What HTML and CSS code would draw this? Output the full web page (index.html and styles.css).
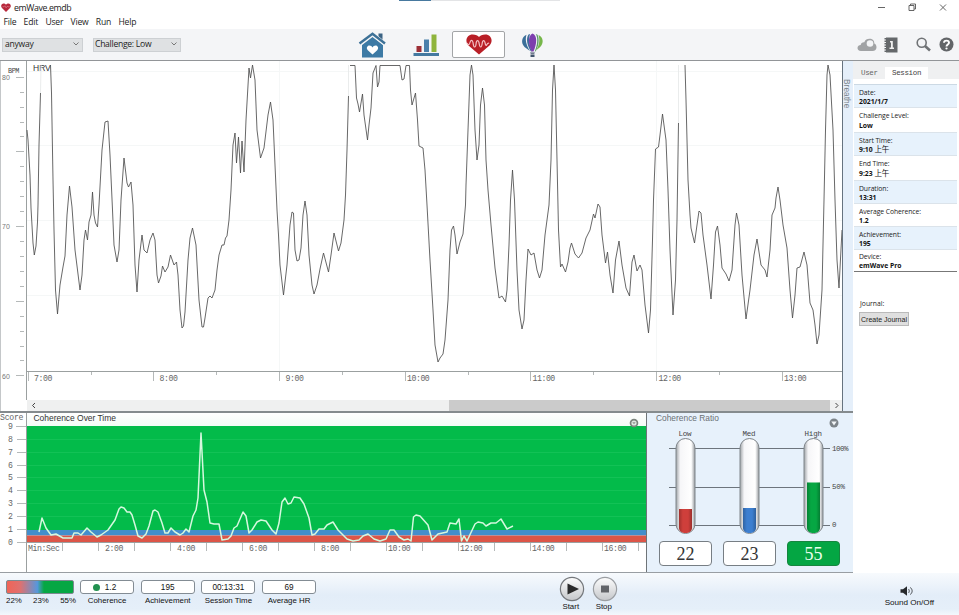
FILE: index.html
```html
<!DOCTYPE html>
<html lang="en">
<head>
    <meta charset="UTF-8">
    <meta name="viewport" content="width=device-width, initial-scale=1.0">
    <title>emWave.emdb</title>
    <link rel="stylesheet" href="styles.css">
</head>
<body>
    <header class="titlebar">
        <svg class="app-icon" width="10" height="9" viewBox="0 0 10 9"><path d="M5 9L1 5C-.8 2.7.7.4 2.6.4 3.8.4 4.6 1 5 1.8 5.4 1 6.2.4 7.4.4 9.3.4 10.8 2.7 9 5z" fill="#b8283c"/><path d="M1.500 3.800h1.300l1-1 1.300 2 1.200-1.500.8.5h1.500" fill="none" stroke="#dc8794" stroke-width=".7"/></svg>
        <span class="app-name">emWave.emdb</span>
        <div class="window-buttons">
            <svg width="70" height="11" viewBox="0 0 70 11" fill="none" stroke="#555" stroke-width=".9">
                <path d="M1 5.500h7M32 3.500h5v5h-5zM33.500 3.300v-1.300h5v5h-1.300M63 2.500l6 6M69 2.500l-6 6"/>
            </svg>
        </div>
        <div class="loading-line"></div>
    </header>
    <nav class="menubar">
        <a>File</a>
        <a>Edit</a>
        <a>User</a>
        <a>View</a>
        <a>Run</a>
        <a>Help</a>
    </nav>

    <div class="toolbar">
        <div class="select select-user">anyway<svg width="6" height="4" viewBox="0 0 6 4"><path d="M.5.5L3 3 5.500.5"/></svg></div>
        <div class="select select-level">Challenge: Low<svg width="6" height="4" viewBox="0 0 6 4"><path d="M.5.5L3 3 5.500.5"/></svg></div>
        <div class="views">
            <div class="view view-home">
                <svg width="28" height="26" viewBox="0 0 28 26">
                    <path d="M20.500 1.500h4v7l-4-3.500z" fill="#3b6384"/>
                    <path d="M4 13L14.500 5 25 13v12.500H4z" fill="#3d7aa5"/>
                    <path d="M1.500 12L14.500 2l12.500 10" fill="none" stroke="#f4f5f7" stroke-width="4"/>
                    <path d="M1.500 11.500L14.500 1.800l12.500 9.700" fill="none" stroke="#3d7197" stroke-width="2.400"/>
                    <path d="M14.500 22.500l-4.700-4.300c-2-2.200-.4-4.700 1.500-4.700 1.500 0 2.700.9 3.200 1.900.5-1 1.700-1.900 3.200-1.900 1.900 0 3.500 2.500 1.500 4.700z" fill="#fff"/>
                </svg>
            </div>
            <div class="view">
                <svg width="28" height="26" viewBox="0 0 28 26">
                    <path d="M4.500 14h5v6h-5z" fill="#9c2f36"/>
                    <path d="M12 7.500h5V20h-5z" fill="#4a80ab"/>
                    <path d="M19.500 2.500h5V20h-5z" fill="#8fb43c"/>
                    <path d="M1.500 21h25.500v3H1.500z" fill="#4479a0"/>
                </svg>
            </div>
            <div class="view active">
                <svg width="28" height="24" viewBox="0 0 28 24">
                    <path d="M14 21.500L3.500 12.500C-.8 7.700 2 1.500 7.700 1.500 10.800 1.500 12.800 2.500 14 4c1.200-1.500 3.200-2.500 6.300-2.500 5.700 0 8.500 6.200 4.200 11z" fill="#b91f27"/>
                    <path d="M2 10c1 2.500 2.500 2 3-.5s2.500-3 3 0 .5 4.500 1.700 4.500 1.200-2 1.500-4.300 2.300-3 2.800 0 .6 4.300 1.700 4.300 1.300-2 1.600-4.300 2.200-3 2.700 0 1.300 3.300 2 1.800 1.500-1.500 2-1" fill="none" stroke="#f4c3c5" stroke-width="1.200"/>
                </svg>
            </div>
            <div class="view view-balloon">
                <svg width="28" height="26" viewBox="0 0 28 26">
                    <path d="M7.500 2.800C2.500 5 1.700 11 5.500 15l5.500 4C7 13 6 7 7.500 2.800z" fill="#3a6f99"/>
                    <path d="M9.500 2.500C6.500 7 8.500 14 12 19.500h.7C10.500 13 9.500 7 11 2z" fill="#3f6b9c"/>
                    <path d="M13.500 1.500c-4.500 2-4.500 10-1 18h2c3.500-8 4-16-1-18z" fill="#7d3fae"/>
                    <path d="M16.800 2c2.500 4.500 1.500 11-1 17.500h.7C20 14 20.500 7 18.500 2.800z" fill="#5d9a6c"/>
                    <path d="M19.500 3c5 2.500 5.500 8 1.700 12L17 18.500C20.500 13 21 8 19.500 3z" fill="#76b64a"/>
                    <path d="M11 20.500h5l-.8 1.200h-3.400zM11.500 22.500h4V25h-4z" fill="#42556d"/>
                </svg>
            </div>
        </div>
        <div class="tools">
            <svg class="tool-cloud" width="20" height="14" viewBox="0 0 20 14">
                <path d="M4 13C1.500 13 .5 11.500.5 10c0-2 1.500-3 3.200-3 .3-2 1.800-3 3.600-2.800C8.300 1.800 10 .8 12.500.8c3 0 5 2 4.800 4.700 1.500.6 2.200 2 2.200 3.700 0 2.300-1.500 3.800-4 3.800z" fill="#a1a3a5"/>
                <circle cx="13" cy="5.500" r="3.300" fill="#f3f4f6"/>
            </svg>
            <svg class="tool-book" width="14" height="16" viewBox="0 0 14 16">
                <path d="M2 .5h11.500v15H2z" fill="#65686b"/>
                <path d="M1.500 1v14" stroke="#65686b" stroke-width="2" stroke-dasharray="1.500 1"/>
                <path d="M6 4h2.800v6.500H10V12H5.500v-1.500H7v-5H6z" fill="#f0f0f0"/>
            </svg>
            <svg class="tool-search" width="15" height="15" viewBox="0 0 15 15" fill="none" stroke="#707376">
                <circle cx="5.700" cy="5.700" r="4.500" stroke-width="1.600"/><path d="M9 9l5 4.500" stroke-width="2.600"/>
            </svg>
            <svg class="tool-help" width="15" height="15" viewBox="0 0 15 15">
                <circle cx="7.500" cy="7.500" r="7" fill="#626568"/>
                <path d="M5 5.800C5 2.800 10 2.900 10 5.700c0 1.800-2.500 1.900-2.500 3.900" fill="none" stroke="#fff" stroke-width="1.900"/><circle cx="7.500" cy="11.500" r="1.100" fill="#fff"/>
            </svg>
        </div>
    </div>

    <main class="workspace">
        <div class="charts">
            <section class="hrv">
                <div class="hrv-plot">
                    <svg width="842" height="339" viewBox="0 61 842 339">
                        <path class="grid" d="M27 71.500h815M27 145.500h815M27 220.500h815M27 295.500h815M279.500 61v310M656.500 61v310"/>
                        <path class="axis" d="M26.500 61v339M27 371.500h815"/>
                        <path class="tick" d="M16 77.500h8M16 151.500h8M16 226.500h8M16 301.500h8M16 375.500h8M20 92.500h4M20 107.500h4M20 122.500h4M20 136.500h4M20 166.500h4M20 181.500h4M20 196.500h4M20 211.500h4M20 241.500h4M20 256.500h4M20 271.500h4M20 286.500h4M20 316.500h4M20 331.500h4M20 346.500h4M20 360.500h4"/>
                        <path class="tick" d="M28.500 372v9M153.500 372v9M279.500 372v9M405.500 372v9M530.500 372v9M656.500 372v9M782.500 372v9M91.500 372v3M216.500 372v3M342.500 372v3M468.500 372v3M593.500 372v3M719.500 372v3"/>
                        <text class="mono dark" x="8" y="73" textLength="11" lengthAdjust="spacingAndGlyphs">BPM</text>
                        <text class="num" x="2" y="80">80</text>
                        <text class="num" x="2" y="229">70</text>
                        <text class="num" x="2" y="378.500">60</text>
                        <text class="title" x="33" y="71">HRV</text>
                        <text class="mono" x="34" y="380.500">7:00</text>
                        <text class="mono" x="159.500" y="380.500">8:00</text>
                        <text class="mono" x="285.500" y="380.500">9:00</text>
                        <text class="mono" x="407" y="380.500">10:00</text>
                        <text class="mono" x="532.500" y="380.500">11:00</text>
                        <text class="mono" x="658.500" y="380.500">12:00</text>
                        <text class="mono" x="784" y="380.500">13:00</text>
                        <path class="trace faint" d="M40.500 93L41 65M348.500 96V65M678.500 123V65"/>
                        <polyline class="trace" points="27,130 28,140 30,175 31,208 33,243 34.300,255 36,246 37.500,222 38,205 39,145 40.500,93"/>
                        <polyline class="trace" points="50.500,65 51.500,93 53,180 54,230 55.500,290 57.500,314 60,285 63,267 65,256 67,215 69.500,186 72,207 75,250 80,290 82,275 84,240 85.500,230 87.500,240 89,222 91,215 92.500,192 94,215 95.500,223 97.500,227 99,205 102,150 105,122 108,121 110,155 112.500,210 114,245 117,262 119,250 121,200 124,158 127,183 128.500,187 131,182 133,205 135,265 137,292 139,260 142,235 144,250 147,253 150,240 153,233 155,240 157,275 158.500,283 161,276 162.500,266 165,272 168,267 170.500,255 174,265 176.500,262 178,275 180,310 182,328 183.500,326 185,312 188,260 190,238 192.500,228 196,245 199,300 202,327 203.500,327 205,318 208,298 210,296 212,298 215,290 217,270 219,255 222,245 224,245 225.500,238 227,236 229,220 231,190 233,145 235,133 236.500,163 238.500,137 240.500,173 242,141 244,172 246,120 249,68 250.500,78 252.500,65 255,80 257,130 260.500,158 264,148 268,115 270.500,102 273,120 275,165 277,210 278.500,235 280,265 283.500,295 287,265 290,225 292,212 293.500,213 295,250 297,261 299,260 301,248 303,215 305,201 307,215 309,255 312,285 314,294 317,285 320,269 323.500,253 328.500,272 331,255 334,233 338.500,251 341,243 344,220 345.500,195 347,150 348.500,96"/>
                        <polyline class="trace" points="350,65.500 355,65.500 356.500,98 358,104 359.500,112 362.500,94 364,115 367.500,140 369,125 371,108 373,73 376,65.500 377.500,87 379,82 380,65.500 400,65.500 402,80 404,79 406,65.500 409.500,65.500 410.500,90 412,105 415.500,93 417.500,120 419,146 423,148 425,170 427,205 430,260 433,310 435,345 438,362 440,358 443,354 445,340 448,300 450,250 451.500,230 453.500,226 455,235 457,254 460,242 463,234 465.500,205 466,185 468,130 470,75 471.500,65 473,75 475,130 477,160 479,145 480.500,105 482.500,88 484.500,105 486,160 488,190 491,225 495,268 499,298 502,296 505.500,302 507,290 509,245 510.500,200 512.500,170 514.500,200 517,270 519,310 522,329 524,320 526,280 528,249 531,255 534,253 537,270 539.500,278 542,270 545,235 549,205 551,160 552.500,90 554,65 555.500,90 557,160 558.500,230 560.500,267 562,264 565.500,272 568,262 570,248 571.500,243 575,254 578.500,258 582,253 586,238 590,230 593.500,214 595,218 598,204 600,207 602,235 605.500,263 607.500,252 610,275 613,293 615.500,260 619,241 622,265 626,288 629.500,296 632,262 634,255 637,271 640,265 642,270 645,305 648.500,333 650.500,310 652.500,240 653.500,200 655.500,149 658.500,147 660,135 662.500,114 666,140 668,190 670,250 673,315 675.500,280 677,220 678.500,123"/>
                        <polyline class="trace" points="685,65 686,100 688,180 690,215 691,228 694.500,243 697,225 699,211 701,213 703,235 707,265 711,299 713.500,265 715.500,232 717.500,226 720,245 722,268 726,274 729,281 732,270 735,225 736.500,213 739,225 742,275 746,319 750,290 754,255 757,239 761,265 765,270 767,277 770,250 772,215 775,208 776,198 778,187 780,200 783,225 787,248 790,290 792.500,318 795,295 797,268 800,267 804,252 807,265 810,303 813,310 815,325 817,344 819,335 822,290 824,200 825.500,130 827,75 828,65 830,75 833,130 835,200 837,260 839,288 842,230"/>
                    </svg>
                    <div class="scrollbar">
                        <span class="scroll-arrow"><svg width="5" height="7" viewBox="0 0 5 7"><path d="M4 1L1.500 3.500 4 6"/></svg></span>
                        <span class="scroll-thumb"></span>
                        <span class="scroll-arrow"><svg width="5" height="7" viewBox="0 0 5 7"><path d="M1.500 1L4 3.500 1.500 6"/></svg></span>
                    </div>
                </div>
                <div class="breathe"><span>Breathe</span></div>
            </section>

            <div class="lower">
                <section class="coherence">
                    <svg width="646" height="159" viewBox="0 413 646 159">
                        <defs>
                            <linearGradient id="titleFade" x2="0" y2="1"><stop offset="0" stop-color="#fff"/><stop offset="1" stop-color="#f3fbf6"/></linearGradient>
                        </defs>
                        <path d="M27 413h619v13H27z" fill="url(#titleFade)"/>
                        <path d="M27 426h619v104H27z" fill="#03bb4a"/>
                        <path d="M27 530h619v5.500H27z" fill="#438ecb"/>
                        <path d="M27 535.500h619v6.500H27z" fill="#dc5548"/>
                        <path d="M27 439.500h619M27 452.500h619M27 465.500h619M27 477.500h619M27 490.500h619M27 503.500h619M27 516.500h619" stroke="#16c459" stroke-width=".8"/>
                        <path class="axis" d="M26.500 413v159M27 542.500h619"/>
                        <path class="tick" d="M16 426.500h10M17 439.500h9M17 452.500h9M17 465.500h9M17 477.500h9M17 490.500h9M17 503.500h9M17 516.500h9M17 529.500h9M17 542.500h9"/>
                        <path class="tick" d="M62.500 543v8M98.500 543v8M134.500 543v8M170.500 543v8M206.500 543v8M242.500 543v8M278.500 543v8M314.500 543v8M350.500 543v8M386.500 543v8M422.500 543v8M458.500 543v8M494.500 543v8M530.500 543v8M566.500 543v8M602.500 543v8M638.500 543v8"/>
                        <text class="mono" x="0" y="420" textLength="23">Score</text>
                        <text class="mono" x="8" y="429">9</text>
                        <text class="mono" x="8" y="441.500">8</text>
                        <text class="mono" x="8" y="454.500">7</text>
                        <text class="mono" x="8" y="467.500">6</text>
                        <text class="mono" x="8" y="480">5</text>
                        <text class="mono" x="8" y="493">4</text>
                        <text class="mono" x="8" y="506">3</text>
                        <text class="mono" x="8" y="519">2</text>
                        <text class="mono" x="8" y="532">1</text>
                        <text class="mono" x="8" y="544.500">0</text>
                        <text class="title" x="33.500" y="421" textLength="82.500">Coherence Over Time</text>
                        <text class="mono" x="28" y="550.500" textLength="31.500">Min:Sec</text>
                        <text class="mono" x="105" y="550.500">2:00</text>
                        <text class="mono" x="177" y="550.500">4:00</text>
                        <text class="mono" x="249" y="550.500">6:00</text>
                        <text class="mono" x="321" y="550.500">8:00</text>
                        <text class="mono" x="388" y="550.500">10:00</text>
                        <text class="mono" x="460" y="550.500">12:00</text>
                        <text class="mono" x="532" y="550.500">14:00</text>
                        <text class="mono" x="604" y="550.500">16:00</text>
                        <polyline class="score-line" points="39,532 42,518 46,528 51,535 56,534 63,538 72,538 74,533 78,533 81,535 87,528 91,532 97,537 101,535 108,530 115,520 119,509 121,507 124,508 127,512 130,512 132,515 135,525 138,536 142,538 146,534 149,526 153,511 155,510 158,512 162,523 165,533 168,533 171,528 175,532 180,535 183,533 186,529 189,532 193,516 196,510 198,498 201,433 204,490 207,502 210,523 214,524 219,524 222,540 228,539 231,536 234,528 237,526 243,512 246,516 249,533 252,530 257,522 261,520 266,521 272,530 276,534 279,523 282,502 285,498 288,504 291,503 294,497 300,498 304,504 309,518 312,535 315,534 319,529 324,529 327,525 333,522 338,530 347,539 353,541 359,540 363,536 368,534 374,539 380,541 386,539 390,530 394,530 399,537 404,540 408,539 411,541 413.500,517 416,515 420,516 428,525 432,540 438,534 447,532 450,523 456,524 459,519 461.500,541 464,536 467,541 475,524 478,522 483,523 486,526 491,523 496,523 501,519 507,529 513,526"/>
                        <circle cx="634" cy="423" r="4.300" fill="#7b837d"/><circle cx="634" cy="423" r="2.600" fill="#dfe7e1"/><path d="M632.300 422.300h3.400l-1.700 2z" fill="#8b938d"/>
                    </svg>
                </section>

                <section class="ratio">
                    <div class="ratio-head">
                        <span>Coherence Ratio</span>
                        <svg width="10" height="10" viewBox="0 0 10 10"><circle cx="5" cy="5" r="4.500" fill="#7d8489"/><path d="M2.300 3.500h5.400L5 7.500z" fill="#f3f6f8"/></svg>
                    </div>
                    <svg class="tubes" width="206" height="110" viewBox="647 427 206 110">
                        <defs>
                            <linearGradient id="glass"><stop offset="0" stop-color="#9fa3a7"/><stop offset=".22" stop-color="#f6f6f8"/><stop offset=".8" stop-color="#fff"/><stop offset="1" stop-color="#989ca0"/></linearGradient>
                            <linearGradient id="shade"><stop offset="0" stop-color="#000" stop-opacity=".22"/><stop offset=".3" stop-color="#000" stop-opacity="0"/><stop offset=".7" stop-color="#000" stop-opacity="0"/><stop offset="1" stop-color="#000" stop-opacity=".25"/></linearGradient>
                        </defs>
                        <path d="M669 448.500h161M669 487.500h161M669 525.500h161" stroke="#6d757d"/>
                        <g fill="url(#glass)" stroke="#7f858a">
                            <rect x="676" y="438.500" width="19" height="95" rx="9.500"/>
                            <rect x="740" y="438.500" width="19" height="95" rx="9.500"/>
                            <rect x="804" y="438.500" width="19" height="95" rx="9.500"/>
                        </g>
                        <path d="M679 509h13v19c0 3-3 5-6.500 5s-6.500-2-6.500-5z" fill="#cf3f3b"/>
                        <path d="M743 508h13v20c0 3-3 5-6.500 5s-6.500-2-6.500-5z" fill="#3d7fd0"/>
                        <path d="M807 482.500h13V528c0 3-3 5-6.500 5s-6.500-2-6.500-5z" fill="#06a743"/>
                        <path d="M679 509h13v19c0 3-3 5-6.500 5s-6.500-2-6.500-5z" fill="url(#shade)"/>
                        <path d="M743 508h13v20c0 3-3 5-6.500 5s-6.500-2-6.500-5z" fill="url(#shade)"/>
                        <path d="M807 482.500h13V528c0 3-3 5-6.500 5s-6.500-2-6.500-5z" fill="url(#shade)"/>
                        <text class="mono dark" x="678.500" y="436" textLength="12.500">Low</text>
                        <text class="mono dark" x="742.500" y="436" textLength="12.500">Med</text>
                        <text class="mono dark" x="804.500" y="436" textLength="17">High</text>
                        <text class="mono dark" x="832" y="450.500" textLength="16">100%</text>
                        <text class="mono dark" x="832" y="489" textLength="12.500">50%</text>
                        <text class="mono dark" x="832" y="527">0</text>
                    </svg>
                    <div class="ratio-values">
                        <div class="ratio-value">22</div>
                        <div class="ratio-value">23</div>
                        <div class="ratio-value high">55</div>
                    </div>
                </section>
            </div>
        </div>

        <aside class="sidebar">
            <div class="tabs">
                <div class="tab">User</div>
                <div class="tab active">Session</div>
            </div>
            <dl class="details">
                <div class="detail"><dt>Date:</dt><dd>2021/1/7</dd></div>
                <div class="detail tall"><dt>Challenge Level:</dt><dd>Low</dd></div>
                <div class="detail"><dt>Start Time:</dt><dd>9:10 <span>上午</span></dd></div>
                <div class="detail tall"><dt>End Time:</dt><dd>9:23 <span>上午</span></dd></div>
                <div class="detail"><dt>Duration:</dt><dd>13:31</dd></div>
                <div class="detail"><dt>Average Coherence:</dt><dd>1.2</dd></div>
                <div class="detail"><dt>Achievement:</dt><dd>195</dd></div>
                <div class="detail"><dt>Device:</dt><dd>emWave Pro</dd></div>
            </dl>
            <div class="journal">
                <p>Journal:</p>
                <button>Create Journal</button>
            </div>
        </aside>
    </main>

    <footer class="statusbar">
        <div class="split">
            <div class="split-bar"></div>
            <div class="split-labels"><span>22%</span><span>23%</span><span>55%</span></div>
        </div>
        <div class="stat"><div class="stat-value"><i class="dot"></i>1.2</div><p>Coherence</p></div>
        <div class="stat"><div class="stat-value">195</div><p>Achievement</p></div>
        <div class="stat"><div class="stat-value">00:13:31</div><p>Session Time</p></div>
        <div class="stat"><div class="stat-value">69</div><p>Average HR</p></div>
        <div class="controls">
            <div class="control">
                <svg width="26" height="26" viewBox="0 0 26 26">
                    <defs><linearGradient id="knob" x2="0" y2="1"><stop offset="0" stop-color="#fdfdfd"/><stop offset="1" stop-color="#c5c7ca"/></linearGradient></defs>
                    <circle cx="13" cy="13" r="11.600" fill="url(#knob)" stroke="#74777b" stroke-width="1.200"/><path d="M8.500 7.500L20 13 8.500 18.500z" fill="#2b2b2b"/>
                </svg>
                <p>Start</p>
            </div>
            <div class="control">
                <svg width="26" height="26" viewBox="0 0 26 26">
                    <circle cx="13" cy="13" r="11.600" fill="url(#knob)" stroke="#9b9ea2" stroke-width="1.200"/><path d="M9 9.500h8v7H9z" fill="#626468"/>
                </svg>
                <p>Stop</p>
            </div>
        </div>
        <div class="sound">
            <svg width="14" height="10" viewBox="0 0 14 10"><path d="M.5 3.300H3L7 .3v9.400L3 6.700H.5z" fill="#26292c"/><path d="M8.500 3c1 1 1 3 0 4M10.200 1.500c2.600 1.500 2.600 5.500 0 7" fill="none" stroke="#555a60"/></svg>
            <p>Sound On/Off</p>
        </div>
    </footer>
</body>
</html>
```
FILE: styles.css
```css
* {
    margin: 0;
    padding: 0;
    box-sizing: border-box;
}

body {
    width: 959px;
    height: 615px;
    overflow: hidden;
    display: flex;
    flex-direction: column;
    background-color: #fff;
    font-family: "Liberation Sans", Arial, sans-serif;
    font-size: 8px;
    color: #222;
}

svg {
    display: block;
    flex: none;
}

/* Title and menu */
.titlebar {
    position: relative;
    height: 15px;
    display: flex;
    align-items: center;
    padding: 0 12px 0 1px;
    font-family: "Open Sans", "Noto Sans", sans-serif;
    font-size: 8.8px;
}

.app-name {
    margin-left: 3px;
    letter-spacing: -0.4px;
}

.window-buttons {
    margin-left: auto;
}

.loading-line {
    position: absolute;
    left: 399px;
    top: 0;
    width: 161px;
    height: 1px;
    background: linear-gradient(to right, #47799f 32px, #e3e4e6 32px);
}

.menubar {
    height: 14px;
    display: flex;
    align-items: center;
    gap: 7.3px;
    padding-left: 3.5px;
    font-family: "Open Sans", "Noto Sans", sans-serif;
    font-size: 8.6px;
    letter-spacing: -0.2px;
}

/* Toolbar */
.toolbar {
    height: 32px;
    display: flex;
    align-items: center;
    background-color: #f4f5f7;
    border-bottom: 1px solid #929598;
}

.select {
    height: 14px;
    display: flex;
    align-items: center;
    justify-content: space-between;
    padding: 0 3px 1px 2px;
    background-color: #dfe1e3;
    border: 1px solid #cdd0d3;
    font-family: "Open Sans", "Noto Sans", sans-serif;
    font-size: 8.6px;
    letter-spacing: -0.28px;
}

.select svg {
    fill: none;
    stroke: #777;
}

.select-user {
    width: 81px;
    margin-left: 2px;
}

.select-level {
    width: 88px;
    margin-left: 10px;
    padding-left: 1px;
}

.views {
    display: flex;
    margin-left: 165px;
}

.view {
    width: 53px;
    height: 27px;
    display: flex;
    align-items: center;
    justify-content: center;
}

.view.active {
    background-color: #fff;
    border: 1px solid #a3a5a7;
    border-radius: 2px;
}

.view-home {
    padding-right: 2px;
}

.view-balloon {
    padding-left: 2px;
}

.tools {
    display: flex;
    align-items: center;
    margin-left: auto;
    padding-right: 5px;
}

.tool-book {
    margin-left: 7px;
}

.tool-search {
    margin-left: 18px;
}

.tool-help {
    margin-left: 8px;
}

/* Charts */
.workspace {
    height: 512px;
    display: flex;
}

.charts {
    width: 853px;
}

.hrv {
    height: 352px;
    display: flex;
    background-color: #e5effa;
    border-bottom: 2px solid #858b8e;
}

.hrv-plot {
    width: 843px;
    background-color: #fff;
    border-right: 1px solid #66737f;
    box-shadow: inset 1px 0 #c4c7c9;
}

.grid {
    stroke: #f5f7f7;
}

.axis {
    stroke: #9ba0a0;
}

.tick {
    stroke: #b5b9b9;
}

.trace {
    fill: none;
    stroke: #4d4d4d;
    stroke-width: 0.85;
    stroke-linejoin: round;
}

.trace.faint {
    stroke: #e6e8e8;
}

.mono {
    font-family: "Liberation Mono", monospace;
    font-size: 8.2px;
    letter-spacing: -0.45px;
    fill: #666;
}

.mono.dark {
    fill: #444;
    font-size: 7.5px;
}

.num {
    font-size: 7px;
    fill: #777;
}

.title {
    font-size: 8.5px;
    fill: #333;
}

.scrollbar {
    height: 11px;
    margin-left: 27px;
    display: flex;
    justify-content: space-between;
    background-color: #eff0f0;
}

.scroll-arrow {
    width: 12px;
    display: flex;
    align-items: center;
    justify-content: center;
}

.scroll-arrow svg {
    fill: none;
    stroke: #444;
}

.scroll-thumb {
    width: 381px;
    margin-left: auto;
    background-color: #cbcbcb;
}

.breathe {
    padding: 18px 0 0 0;
    font-size: 8.4px;
    line-height: 8px;
    color: #7c858d;
}

.breathe span {
    display: block;
    writing-mode: vertical-rl;
}

.lower {
    height: 160px;
    display: flex;
    border-bottom: 1px solid #999ea3;
}

.coherence {
    width: 647px;
    border-right: 1px solid #6e7478;
}

.score-line {
    fill: none;
    stroke: #d5f8de;
    stroke-width: 1.5;
    stroke-linejoin: round;
}

.ratio {
    width: 206px;
    background-color: #e7f1fb;
}

.ratio-head {
    height: 14px;
    display: flex;
    justify-content: space-between;
    padding: 0 14px 0 9px;
    font-size: 8.4px;
    line-height: 10px;
    color: #6b7075;
}

.ratio-head svg {
    margin-top: 5px;
}

.ratio-values {
    display: flex;
    gap: 11px;
    padding: 4px 0 0 12px;
}

.ratio-value {
    width: 53px;
    height: 25px;
    background-color: #fff;
    border: 1px solid #777e84;
    border-radius: 4px;
    text-align: center;
    font-family: "Liberation Serif", serif;
    font-size: 18px;
    line-height: 24px;
    color: #333;
}

.ratio-value.high {
    background-color: #04a643;
    border-color: #16863f;
    color: #e8ffee;
}

/* Session details */
.sidebar {
    width: 106px;
    background-color: #fff;
}

.tabs {
    height: 18px;
    display: flex;
    align-items: flex-end;
    background-color: #eff0f1;
    font-family: "Liberation Mono", monospace;
    font-size: 7.5px;
    letter-spacing: -0.35px;
    line-height: 12px;
    color: #666;
}

.tab {
    width: 32px;
    padding-left: 8px;
}

.tab.active {
    width: 43px;
    padding-left: 7px;
    background-color: #fff;
    color: #444;
}

.details {
    margin: 5px 2px 0 1px;
    border-top: 1px solid #ccd9e4;
    border-bottom: 1px solid #777;
    font-family: "Open Sans", "Noto Sans", "Noto Sans CJK SC", sans-serif;
    font-size: 6.8px;
    letter-spacing: -0.08px;
    line-height: 9px;
}

.detail {
    height: 23px;
    padding: 3px 0 0 5px;
    border-bottom: 1px solid #dbe3ea;
}

.detail:nth-child(odd) {
    background-color: #e7f2fc;
}

.detail.tall {
    height: 25px;
}

.detail.tall dd {
    margin-top: 1px;
}

.detail:last-child {
    height: 21px;
    padding-top: 2px;
    border: none;
}

dd {
    font-weight: bold;
    letter-spacing: 0;
    color: #111;
}

dd span {
    font-size: 7.5px;
    font-weight: normal;
}

.journal {
    padding: 28px 0 0 6px;
    font-family: "Open Sans", "Noto Sans", sans-serif;
    font-size: 6.8px;
    line-height: 8px;
}

.journal p {
    padding-left: 1px;
}

.journal button {
    display: block;
    width: 50px;
    height: 14px;
    margin-top: 4px;
    background-color: #dfdfdf;
    border: 1px solid #bababa;
    font-family: "Liberation Sans", Arial, sans-serif;
    font-size: 7px;
    color: #222;
}

/* Bottom bar */
.statusbar {
    height: 42px;
    display: flex;
    padding: 7px 0 0 6px;
    background: linear-gradient(to bottom, #f7fafd, #e3edf8 22px, #e5eff9 36px, #f3f8fc);
    font-size: 7.9px;
    line-height: 9px;
    color: #111;
}

.split {
    width: 68px;
    margin-right: 6px;
}

.split-bar {
    height: 14px;
    border: 1px solid #7c8990;
    border-radius: 2px;
    background: linear-gradient(to right, #f16457, #df716f 20%, #5797dc 46%, #06a743 56%);
}

.split-labels {
    display: flex;
    justify-content: space-between;
    margin: 2px -2px 0 0;
}

.stat {
    width: 54px;
    margin-right: 6.7px;
}

.stat-value {
    height: 14px;
    display: flex;
    align-items: center;
    justify-content: center;
    background-color: #fff;
    border: 1px solid #838c94;
    border-radius: 3px;
    font-size: 8.2px;
}

.stat p {
    margin-top: 2px;
    text-align: center;
    white-space: nowrap;
}

.dot {
    width: 7px;
    height: 7px;
    margin-right: 5px;
    margin-left: -5px;
    border-radius: 50%;
    background-color: #229150;
}

.controls {
    display: flex;
    gap: 7px;
    margin: -4px 0 0 236px;
}

.control {
    width: 26px;
    text-align: center;
}

.control p {
    margin: 0 2px 0 0;
}

.sound {
    display: flex;
    flex-direction: column;
    align-items: center;
    margin: 6px 25px 0 auto;
    font-size: 8.1px;
}

.sound svg {
    margin: 0 0 2px -5px;
}
```
